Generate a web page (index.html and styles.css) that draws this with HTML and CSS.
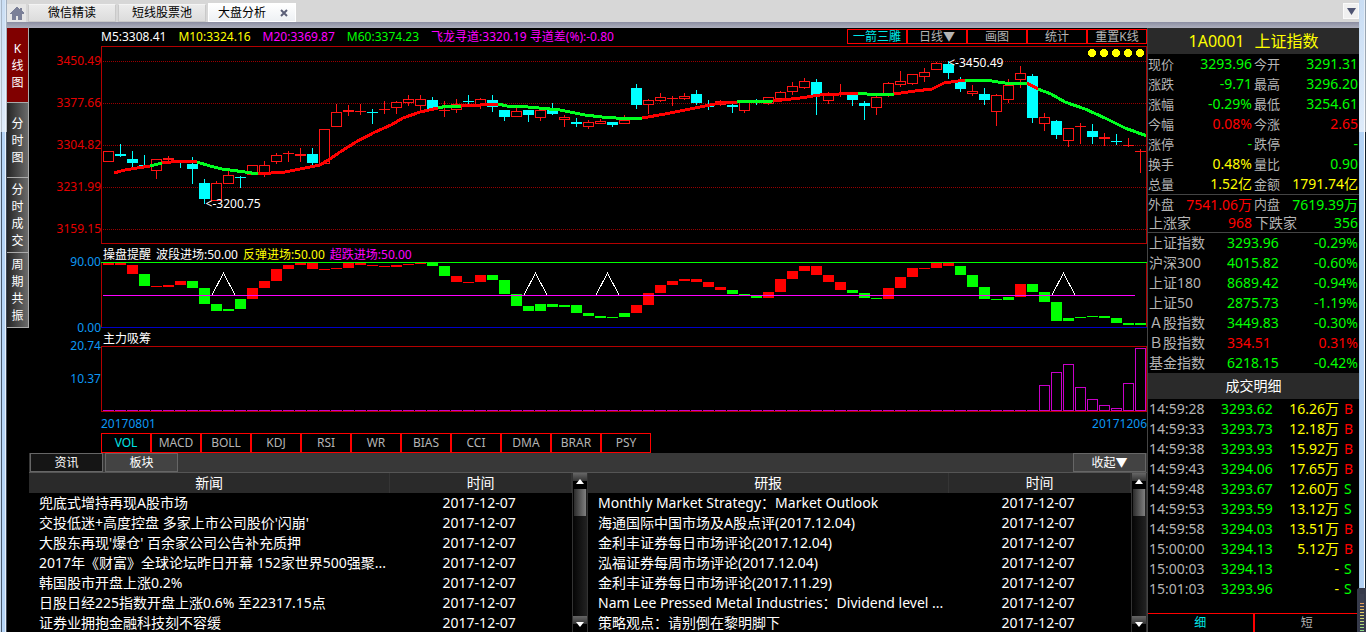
FILE: index.html
```html
<!DOCTYPE html>
<html lang="zh-CN">
<head>
<meta charset="utf-8">
<title>大盘分析</title>
<link rel="stylesheet" href="styles.css">
</head>
<body>
<div class="window">
  <div class="edge edge-left"></div>
  <div class="app">
    <header class="tabbar">
      <button class="home" aria-label="首页"><svg width="14" height="13" viewBox="0 0 14 13" shape-rendering="crispEdges"><path d="M7 0 0 6v1h2v6h4V9h2v4h4V7h2V6l-2-2V1h-2v2z" fill="#7b8098"/></svg></button>
      <button class="page-tab">微信精读</button>
      <button class="page-tab">短线股票池</button>
      <div class="page-tab page-tab-active"><span>大盘分析</span><button class="close" aria-label="关闭"><svg width="8" height="8" viewBox="0 0 8 8"><path d="M1 1l6 6M7 1 1 7" stroke="#5c6078" stroke-width="2"/></svg></button></div>
      <button class="more" aria-label="更多"><svg width="9" height="7" viewBox="0 0 9 7"><path d="M0 0h9L4.500 7z" fill="#4e5472"/></svg></button>
    </header>
    <div class="body">
      <nav class="side">
        <button class="side-tab side-tab-active">K<br>线<br>图</button>
        <button class="side-tab">分<br>时<br>图</button>
        <button class="side-tab">分<br>时<br>成<br>交</button>
        <button class="side-tab">周<br>期<br>共<br>振</button>
      </nav>
      <main class="main">
        <div class="chart-head">
          <div class="legend">
            <span class="white">M5:3308.41</span><span class="yellow">M10:3324.16</span><span class="magenta">M20:3369.87</span><span class="green">M60:3374.23</span><span class="magenta">飞龙寻道:3320.19 寻道差(%):-0.80</span>
          </div>
          <div class="tools">
            <button class="cell cyan">一箭三雕</button><button class="cell">日线▼</button><button class="cell">画图</button><button class="cell">统计</button><button class="cell">重置K线</button>
          </div>
        </div>
        <section class="panel">
          <div class="axis axis-price"><span>3450.49</span><span>3377.66</span><span>3304.82</span><span>3231.99</span><span>3159.15</span></div>
          <div class="plot plot-price">
            <svg id="price" viewBox="101 46 1046 198" preserveAspectRatio="none"></svg>
            <span class="mark mark-low">&lt;-3200.75</span>
            <span class="mark mark-high">&lt;-3450.49</span>
          </div>
        </section>
        <div class="panel-title"><span class="white">操盘提醒</span><span class="white">波段进场:50.00</span><span class="yellow">反弹进场:50.00</span><span class="magenta">超跌进场:50.00</span></div>
        <section class="panel">
          <div class="axis axis-ends"><span>90.00</span><span>0.00</span></div>
          <div class="plot plot-small"><svg id="signal" viewBox="101 262 1046 66" preserveAspectRatio="none"></svg></div>
        </section>
        <div class="panel-title"><span class="white">主力吸筹</span></div>
        <section class="panel">
          <div class="axis axis-flow"><span>20.74</span><span>10.37</span></div>
          <div class="plot plot-small"><svg id="flow" viewBox="101 346 1046 66" preserveAspectRatio="none"></svg></div>
        </section>
        <div class="dates"><span>20170801</span><span>20171206</span></div>
        <div class="indicators">
          <button class="cell cyan">VOL</button><button class="cell">MACD</button><button class="cell">BOLL</button><button class="cell">KDJ</button><button class="cell">RSI</button><button class="cell">WR</button><button class="cell">BIAS</button><button class="cell">CCI</button><button class="cell">DMA</button><button class="cell">BRAR</button><button class="cell">PSY</button>
        </div>
        <div class="info-bar">
          <button class="info-tab info-tab-active">资讯</button>
          <button class="info-tab">板块</button>
          <button class="info-tab collapse">收起▼</button>
        </div>
        <div class="news">
          <div class="news-pane">
            <table class="news-table">
              <thead><tr><th class="news-name">新闻</th><th>时间</th></tr></thead>
              <tbody>
                <tr><td>兜底式增持再现A股市场</td><td>2017-12-07</td></tr>
                <tr><td>交投低迷+高度控盘 多家上市公司股价'闪崩'</td><td>2017-12-07</td></tr>
                <tr><td>大股东再现'爆仓' 百余家公司公告补充质押</td><td>2017-12-07</td></tr>
                <tr><td>2017年《财富》全球论坛昨日开幕 152家世界500强聚...</td><td>2017-12-07</td></tr>
                <tr><td>韩国股市开盘上涨0.2%</td><td>2017-12-07</td></tr>
                <tr><td>日股日经225指数开盘上涨0.6% 至22317.15点</td><td>2017-12-07</td></tr>
                <tr><td>证券业拥抱金融科技刻不容缓</td><td>2017-12-07</td></tr>
              </tbody>
            </table>
            <div class="scroll">
              <button class="scroll-btn" aria-label="向上"><svg width="8" height="5" viewBox="0 0 8 5"><path d="M4 0l4 5H0z" fill="#fff"/></svg></button>
              <div class="thumb"></div>
              <button class="scroll-btn scroll-down" aria-label="向下"><svg width="8" height="5" viewBox="0 0 8 5"><path d="M0 0h8L4 5z" fill="#fff"/></svg></button>
            </div>
          </div>
          <div class="news-pane">
            <table class="news-table">
              <thead><tr><th class="news-name">研报</th><th>时间</th></tr></thead>
              <tbody>
                <tr><td>Monthly Market Strategy：Market Outlook</td><td>2017-12-07</td></tr>
                <tr><td>海通国际中国市场及A股点评(2017.12.04)</td><td>2017-12-07</td></tr>
                <tr><td>金利丰证券每日市场评论(2017.12.04)</td><td>2017-12-07</td></tr>
                <tr><td>泓福证券每周市场评论(2017.12.04)</td><td>2017-12-07</td></tr>
                <tr><td>金利丰证券每日市场评论(2017.11.29)</td><td>2017-12-07</td></tr>
                <tr><td>Nam Lee Pressed Metal Industries：Dividend level ...</td><td>2017-12-07</td></tr>
                <tr><td>策略观点：请别倒在黎明脚下</td><td>2017-12-07</td></tr>
              </tbody>
            </table>
            <div class="scroll">
              <button class="scroll-btn" aria-label="向上"><svg width="8" height="5" viewBox="0 0 8 5"><path d="M4 0l4 5H0z" fill="#fff"/></svg></button>
              <div class="thumb"></div>
              <button class="scroll-btn scroll-down" aria-label="向下"><svg width="8" height="5" viewBox="0 0 8 5"><path d="M0 0h8L4 5z" fill="#fff"/></svg></button>
            </div>
          </div>
        </div>
      </main>
      <aside class="quote">
        <h1 class="quote-title"><span>1A0001</span><span>上证指数</span></h1>
        <dl class="facts">
          <div><dt>现价</dt><dd class="green">3293.96</dd></div><div><dt>今开</dt><dd class="green">3291.31</dd></div>
          <div><dt>涨跌</dt><dd class="green">-9.71</dd></div><div><dt>最高</dt><dd class="green">3296.20</dd></div>
          <div><dt>涨幅</dt><dd class="green">-0.29%</dd></div><div><dt>最低</dt><dd class="green">3254.61</dd></div>
          <div><dt>今幅</dt><dd class="red">0.08%</dd></div><div><dt>今涨</dt><dd class="red">2.65</dd></div>
          <div><dt>涨停</dt><dd class="green">-</dd></div><div><dt>跌停</dt><dd class="green">-</dd></div>
          <div><dt>换手</dt><dd class="yellow">0.48%</dd></div><div><dt>量比</dt><dd class="green">0.90</dd></div>
          <div><dt>总量</dt><dd class="yellow">1.52亿</dd></div><div><dt>金额</dt><dd class="yellow">1791.74亿</dd></div>
        </dl>
        <dl class="facts facts-ruled">
          <div><dt>外盘</dt><dd class="red">7541.06万</dd></div><div><dt>内盘</dt><dd class="green">7619.39万</dd></div>
          <div class="wide"><dt>上涨家</dt><dd class="red">968</dd></div><div class="wide"><dt>下跌家</dt><dd class="green">356</dd></div>
        </dl>
        <table class="indices">
          <tbody>
            <tr><th>上证指数</th><td class="green">3293.96</td><td class="green">-0.29%</td></tr>
            <tr><th>沪深300</th><td class="green">4015.82</td><td class="green">-0.60%</td></tr>
            <tr><th>上证180</th><td class="green">8689.42</td><td class="green">-0.94%</td></tr>
            <tr><th>上证50</th><td class="green">2875.73</td><td class="green">-1.19%</td></tr>
            <tr><th>Ａ股指数</th><td class="green">3449.83</td><td class="green">-0.30%</td></tr>
            <tr><th>Ｂ股指数</th><td class="red">334.51</td><td class="red">0.31%</td></tr>
            <tr><th>基金指数</th><td class="green">6218.15</td><td class="green">-0.42%</td></tr>
          </tbody>
        </table>
        <h2 class="deals-title">成交明细</h2>
        <table class="deals">
          <tbody>
            <tr><th>14:59:28</th><td>3293.62</td><td>16.26万</td><td class="red">B</td></tr>
            <tr><th>14:59:33</th><td>3293.73</td><td>12.18万</td><td class="red">B</td></tr>
            <tr><th>14:59:38</th><td>3293.93</td><td>15.92万</td><td class="red">B</td></tr>
            <tr><th>14:59:43</th><td>3294.06</td><td>17.65万</td><td class="red">B</td></tr>
            <tr><th>14:59:48</th><td>3293.67</td><td>12.60万</td><td class="green">S</td></tr>
            <tr><th>14:59:53</th><td>3293.59</td><td>13.12万</td><td class="green">S</td></tr>
            <tr><th>14:59:58</th><td>3294.03</td><td>13.51万</td><td class="red">B</td></tr>
            <tr><th>15:00:00</th><td>3294.13</td><td>5.12万</td><td class="red">B</td></tr>
            <tr><th>15:00:03</th><td>3294.13</td><td>-</td><td class="green">S</td></tr>
            <tr><th>15:01:03</th><td>3293.96</td><td>-</td><td class="green">S</td></tr>
          </tbody>
        </table>
        <div class="quote-tabs"><button class="cyan">细</button><button>短</button></div>
      </aside>
    </div>
  </div>
  <div class="edge edge-right"></div>
  <div class="gadget"></div>
</div>
<script src="chart.js"></script>
</body>
</html>
```
FILE: styles.css
```css
* { box-sizing: border-box; }
body { margin: 0; background: #000; color: #fff; font: 12px/18px "Noto Sans", "Noto Sans CJK SC", sans-serif; }
button { margin: 0; padding: 0; border: 0; border-radius: 0; background: none; color: inherit; font: inherit; }
svg { display: block; }
h1, h2, dl, dd { margin: 0; font-weight: normal; }
table { border-collapse: collapse; table-layout: fixed; width: 100%; font-size: 14px; line-height: 20px; }
th, td { padding: 0; font-weight: normal; text-align: left; white-space: nowrap; }

.white { color: #fff; }
.yellow { color: #ff0; }
.magenta { color: #f0f; }
.green { color: #0f0; }
.red { color: #f00; }

.window { position: relative; display: flex; height: 100vh; overflow: hidden; }
.edge { flex: none; width: 7px; }
.edge-left { background: linear-gradient(#d5e3f3aa, #f4f8fdaa 132px, transparent 132px), linear-gradient(90deg, #c8dcf2 1px, #4a5a6e 1px 2px, #b4d3f5 2px 5px, #e8f1fb 5px 6px, #3c4654 6px); }
.edge-right { background: linear-gradient(#d5e3f3aa, #f4f8fdaa 132px, transparent 132px), linear-gradient(90deg, #9fc3ea 1px, #b4d3f5 1px 5px, #fff 5px 6px, #10202c 6px); }
.gadget { position: absolute; right: 0; bottom: 0; width: 9px; height: 44px; border: solid #363a4a; border-width: 6px 2px 0 3px; border-top-left-radius: 3px; background: repeating-linear-gradient(transparent 0 1px, #3b3f50 1px 3px), linear-gradient(#3b3f50 9px, #e59a5a 9px, #e6d36a 20px, #86d98a); }

.app { flex: 1; min-width: 0; display: flex; flex-direction: column; }
.tabbar { display: flex; align-items: flex-end; gap: 2px; height: 28px; padding: 0 0 6px; background: linear-gradient(#d7d7d7 22px, #8b8ea2 22px, #aeb0bd); color: #000; }
.home { display: flex; align-items: center; justify-content: center; width: 19px; height: 18px; background: #e6e6e6; }
.page-tab { width: 88px; height: 18px; border: 1px solid #c9c9c9; border-top-color: #f4f4f4; background: linear-gradient(#ececec, #dcdcdc); line-height: 16px; text-align: center; }
.page-tab-active { display: flex; align-items: center; justify-content: space-between; height: 19px; padding: 0 7px 0 9px; border-color: #fff; background: linear-gradient(#fff, #eef1f4); }
.more { display: flex; align-items: center; justify-content: center; align-self: center; width: 16px; height: 16px; margin-left: auto; background: #f0f0f0; border: 1px solid #fafafa; }

.body { flex: 1; min-height: 0; display: flex; }
.side { flex: none; width: 22px; }
.side-tab { display: flex; align-items: center; justify-content: center; width: 22px; height: 75px; border-right: 1px solid #aaa; border-bottom: 1px solid #aaa; background: linear-gradient(90deg, #262626, #6a6a6a); line-height: 17px; }
.side-tab-active { background: #800000; }

.main { flex: 1; min-width: 0; display: flex; flex-direction: column; }
.chart-head { display: flex; justify-content: space-between; height: 18px; padding-left: 72px; }
.legend { display: flex; gap: 12px; white-space: nowrap; }
.tools, .indicators { display: flex; }
.cell { border: 1px solid #f00; color: #b4b4b4; text-align: center; white-space: nowrap; }
.tools .cell { width: 60px; height: 15px; margin-top: 1px; line-height: 13px; }
.cyan, .cell.cyan { color: #00e6e6; }

.panel { display: flex; }
.axis { flex: none; display: flex; flex-direction: column; width: 72px; text-align: right; color: #0c98f4; }
.axis-price { height: 198px; margin-top: -6px; margin-bottom: 6px; line-height: 42px; color: #e60000; }
.axis-ends { justify-content: space-between; margin: -9px 0; }
.axis-flow { height: 66px; margin-top: -17px; line-height: 33px; }
.plot { position: relative; flex: 1; min-width: 0; }
.plot svg { width: 100%; height: 100%; }
.plot-price { height: 198px; }
.plot-small { height: 66px; }
.mark { position: absolute; }
.mark-low { left: 10%; top: 75%; }
.mark-high { left: 81%; top: 4%; }
.panel-title { display: flex; gap: 5px; height: 18px; padding: 2px 0 0 74px; }
.dates { display: flex; justify-content: space-between; height: 21px; padding: 3px 0 0 72px; color: #0c98f4; }
.indicators { padding-left: 72px; }
.indicators .cell { width: 50px; height: 20px; line-height: 18px; }

.info-bar { display: flex; gap: 2px; height: 20px; padding: 0 1px; background: #383838; border-bottom: 1px solid #555; }
.info-tab { width: 73px; height: 19px; border: 1px solid #666; background: #434343; line-height: 17px; }
.info-tab-active { background: #151515; }
.collapse { margin-left: auto; }

.news { flex: 1; min-height: 0; display: flex; }
.news-pane { flex: 1; min-width: 0; display: flex; overflow: hidden; background: #000; }
.news-table { flex: 1; align-self: flex-start; }
.news-table thead { background: #2a2a2a; }
.news-table th { height: 20px; border-right: 1px solid #353535; text-align: center; }
.news-name { width: 66.500%; }
.news-table td:first-child { padding-left: 10px; overflow: hidden; }
.news-table td:last-child { padding-right: 3px; text-align: center; }
.scroll { flex: none; display: flex; flex-direction: column; width: 16px; border: solid #333; border-width: 0 1px; background: linear-gradient(90deg, #050505, #222); }
.scroll-btn { display: flex; align-items: center; justify-content: center; flex: none; height: 16px; background: linear-gradient(#666, #333 50%, #000 50%); }
.scroll-down { margin-top: auto; }
.thumb { height: 27px; margin: 0 1px; background: linear-gradient(90deg, #2c2c2c, #808080); }

.quote { flex: none; display: flex; flex-direction: column; width: 212px; border-left: 1px solid #444; }
.quote-title { display: flex; justify-content: center; gap: 10px; height: 26px; background: #2a2a2a; color: #ff0; font-size: 16px; line-height: 26px; }
.facts { display: grid; grid-template-columns: 104px 1fr; column-gap: 2px; padding-right: 1px; font-size: 14px; line-height: 20px; }
.facts div { display: flex; justify-content: space-between; }
.facts dt { color: #b4b4b4; font-size: 13px; }
.facts-ruled { border: solid #444; border-width: 1px 0; line-height: 19px; }
.facts .wide { padding-left: 1px; line-height: 18px; }
.facts .wide dt { font-size: 14px; }
.indices th, .deals th { padding-left: 1px; color: #b4b4b4; }
.indices th { width: 79px; }
.indices td:last-child { padding-right: 1px; text-align: right; }
.deals-title { height: 26px; background: #2a2a2a; font-size: 14px; line-height: 26px; text-align: center; }
.deals th { width: 73px; }
.deals td:nth-child(2) { width: 52px; color: #0f0; }
.deals td:nth-child(3) { color: #ff0; text-align: right; }
.deals td:nth-child(4) { width: 20px; padding-left: 5px; }
.quote-tabs { display: flex; height: 19px; margin-top: auto; border-top: 1px solid #f00; color: #b4b4b4; }
.quote-tabs button { flex: 1; border: 0 solid #f00; }
.quote-tabs button:first-child { border-right-width: 2px; }
```
FILE: chart.js
```js
const STEP = 12, LEFT = 103, WIDTH = 11;

function add(svg, tag, attrs) {
  const el = document.createElementNS("http://www.w3.org/2000/svg", tag);
  for (const k in attrs) el.setAttribute(k, attrs[k]);
  svg.appendChild(el);
}
const box = (svg, x, y, width, height, fill) => add(svg, "rect", { x, y, width, height, fill });
const hollow = (svg, x, y, w, h, stroke) =>
  add(svg, "rect", { x: x + .5, y: y + .5, width: w - 1, height: h - 1, fill: "#000", stroke });

// colour, body top, body bottom, high, low
const candles = `r 151 162 151 162|c 154 156 144 157|c 159 163 151 167|c 165 167 155 168|r 159 171 159 179|r 158 160 156 162|c 160 161 160 168|c 164 169 157 184|c 183 199 179 204|r 183 201 181 201|r 175 184 171 184|c 177 178 176 188|r 165 175 165 175|r 165 174 161 177|r 155 162 153 164|r 153 154 151 162|r 154 156 148 162|c 154 163 148 165|r 129 164 129 164|r 112 127 104 127|r 110 112 105 116|r 111 112 104 115|c 112 113 109 124|r 109 110 101 114|r 102 108 101 114|r 99 103 95 106|r 99 106 95 110|c 100 109 97 109|r 110 111 101 117|r 104 110 99 113|c 101 102 95 105|r 99 106 98 109|c 100 107 95 112|c 110 117 110 121|r 111 117 108 117|c 110 115 110 122|r 110 118 110 121|c 109 114 103 115|r 117 120 115 127|c 122 124 118 127|r 122 127 120 129|r 121 124 119 124|c 122 125 122 127|r 120 124 115 124|c 88 105 84 109|r 100 105 99 114|r 97 101 93 102|r 98 99 96 106|r 96 99 93 100|c 94 103 90 105|c 105 107 100 110|r 101 105 100 106|c 105 107 104 113|r 102 111 102 113|c 101 103 99 105|r 97 104 97 105|r 92 99 91 99|r 86 92 82 95|r 81 88 78 89|c 82 96 79 115|r 95 101 92 104|r 93 95 84 97|c 94 100 94 106|c 103 106 101 120|r 97 108 96 115|r 83 95 82 97|r 81 85 71 87|r 74 84 74 85|r 72 77 68 82|r 63 70 62 70|c 64 73 61 79|c 82 89 77 92|r 91 94 85 96|c 94 100 88 105|r 95 112 94 126|r 85 100 79 103|r 73 80 66 88|c 76 118 74 123|r 117 124 113 131|c 121 135 120 139|r 128 141 128 147|r 126 127 123 144|c 131 137 124 144|r 137 139 133 146|c 141 142 134 145|r 145 146 138 147|r 151 152 149 173`;

const average = [
  ["r", "114,173 125,170 137,168 150,166"], ["g", "150,166 162,163"], ["r", "162,163 180,161 197,162"],
  ["g", "197,162 210,166 222,169 245,172 258,174"],
  ["r", "258,174 285,172 300,169 320,165 333,157 340,152 356,142 375,132 391,125 403,118 420,112 438,108"],
  ["g", "438,108 447,106 461,106"], ["r", "461,106 480,105 498,104"],
  ["g", "498,104 507,106 528,107 560,110 585,115 602,117 630,119 642,118"],
  ["r", "642,118 665,114 690,109 705,106 725,102 737,102"], ["g", "737,102 773,101"],
  ["r", "773,101 800,98 820,95 858,93"], ["g", "858,93 867,94 894,94"],
  ["r", "894,94 915,91 932,89 944,83 965,80"], ["g", "965,80 985,80 1005,83 1027,83"],
  ["r", "1027,83 1038,89"], ["g", "1038,89 1051,94 1065,102 1085,109 1105,118 1125,128 1147,136"]
];

const price = document.getElementById("price");
price.setAttribute("shape-rendering", "crispEdges");
[61, 103, 145, 187, 229].forEach(y =>
  add(price, "path", { d: `M103 ${y}.5H1146`, stroke: "#900", "stroke-dasharray": "1 1" }));
candles.split("|").forEach((row, i) => {
  const [kind, ...v] = row.split(" ");
  const [top, bottom, high, low] = v.map(Number);
  const x = LEFT + i * STEP, color = kind === "r" ? "#ff1414" : "#0ff";
  box(price, x + 5, high, 1, low - high, color);
  if (kind === "r" && bottom - top > 2) hollow(price, x, top, WIDTH, bottom - top, color);
  else box(price, x, top, WIDTH, bottom - top, color);
});
average.forEach(([kind, points]) =>
  add(price, "polyline", { points, fill: "none", stroke: kind === "r" ? "#f00" : "#00ff20", "stroke-width": 3 }));
for (let x = 1092; x <= 1140; x += 12) add(price, "circle", { cx: x, cy: 53, r: 4, fill: "#ff0" });
box(price, 101, 46, 1046, 1, "#b40000");
box(price, 101, 243, 1046, 1, "#b40000");
box(price, 101, 46, 1, 198, "#b40000");
box(price, 1146, 46, 1, 198, "#b40000");

const bars = `r263-265 r263-265 r265-274 g274-286 r286-287 r285-287 r281-285 g281-288 g288-304 g304-311 g309-311 g299-309 r288-299 r281-288 r269-281 r265-269 r263-265 r263-269 r269-270 r268-269 r263-268 r263-265 r265-266 r266-267 r265-267 r264-265 r263-264 g263-266 g266-276 r276-282 r282-283 r275-282 g275-280 g280-294 g294-306 g306-311 g304-311 g304-307 g305-307 g305-313 g313-316 g316-318 g317-318 g313-317 r305-313 r293-305 r285-293 r281-285 r279-281 r279-282 r282-287 r287-290 g290-294 g294-295 g295-298 r292-298 r279-292 r271-279 r266-271 r266-275 r275-282 r282-290 g290-293 g293-298 g298-299 r288-299 r277-288 r268-277 r268-269 r263-268 r263-266 g266-275 g275-287 g287-299 g299-300 g297-300 r284-297 g284-292 g292-302 g302-321 g318-321 g317-318 g316-317 g316-318 g318-323 g323-325 g323-325`;
const signal = document.getElementById("signal");
signal.setAttribute("shape-rendering", "crispEdges");
box(signal, 101, 262, 1, 66, "#b40000");
box(signal, 1146, 262, 1, 66, "#b40000");
bars.split(" ").forEach((bar, i) => {
  const [top, bottom] = bar.slice(1).split("-").map(Number);
  box(signal, LEFT + i * STEP, top, WIDTH, bottom - top, bar[0] === "r" ? "#f00" : "#0f0");
});
box(signal, 101, 262, 1046, 1, "#0f0");
box(signal, 103, 295, 1032, 1, "#f0f");
box(signal, 101, 327, 1046, 1, "#0000c8");
[223, 535, 607, 1063].forEach(x =>
  add(signal, "path", { d: `M${x - 11} 295 ${x + .5} 273l11.500 22`, fill: "none", stroke: "#fff" }));

const flow = document.getElementById("flow");
flow.setAttribute("shape-rendering", "crispEdges");
box(flow, 101, 346, 1046, 1, "#b40000");
box(flow, 101, 411, 1046, 1, "#b40000");
box(flow, 101, 346, 1, 66, "#b40000");
box(flow, 1146, 346, 1, 66, "#b40000");
const inflow = [385, 372, 364, 387, 399, 405, 408, 383, 348];
for (let i = 0; i < 87; i++) {
  const x = LEFT + i * STEP;
  if (i < 78) box(flow, x, 410, WIDTH, 1, "#c800c8");
  else hollow(flow, x, inflow[i - 78], WIDTH, 411 - inflow[i - 78], "#c800c8");
}
```
